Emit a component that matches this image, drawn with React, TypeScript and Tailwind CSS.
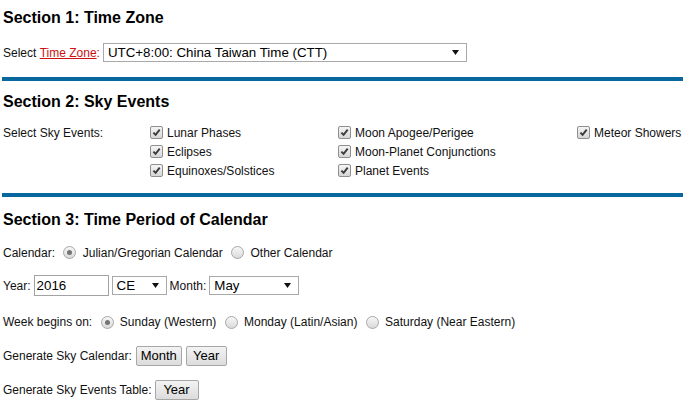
import React from 'react';

const Arrow = () => (
  <svg width="7" height="5" viewBox="0 0 7 5" className="shrink-0">
    <path d="M0 0 H7 L3.5 5 Z" fill="#111" />
  </svg>
);

const Check = () => (
  <span className="inline-flex h-[13px] w-[13px] shrink-0 items-center justify-center rounded-[2px] border border-[#8f8f8f] bg-linear-to-b from-[#f5f5f5] to-[#d6d6d6]">
    <svg width="9" height="9" viewBox="0 0 9 9">
      <path d="M1.4 4.6 L3.6 6.9 L7.7 1.6" fill="none" stroke="#3b3b3b" strokeWidth="1.9" />
    </svg>
  </span>
);

const Radio = ({ on }: { on?: boolean }) => (
  <span className="ml-[5px] mr-[3px] inline-flex h-[13px] w-[13px] shrink-0 items-center justify-center rounded-full border border-[#a8a8a8] bg-linear-to-b from-[#f7f7f7] to-[#dadada]">
    {on && <span className="h-[5px] w-[5px] rounded-full bg-[#747474]" />}
  </span>
);

interface SelectProps {
  value: string;
  className: string;
}

const Select: React.FC<SelectProps> = ({ value, className }) => (
  <span className={`flex items-center justify-between border border-[#a9a9a9] bg-white pl-[4px] pr-[7px] text-[13.33px] text-black ${className}`}>
    <span>{value}</span>
    <Arrow />
  </span>
);

const Button = ({ label, className }: { label: string; className: string }) => (
  <span className={`flex h-[20px] items-center justify-center rounded-[2px] border border-[#a7a7a7] bg-linear-to-b from-[#f3f3f3] to-[#dcdcdc] text-[13px] text-black ${className}`}>
    {label}
  </span>
);

const Heading = ({ text, className }: { text: string; className: string }) => (
  <h2 className={`flex items-center text-[16px] font-bold leading-[18px] text-black ${className}`}>{text}</h2>
);

const Divider = () => <div className="ml-[2px] h-[4px] bg-[#06689e]" />;

const CheckItem = ({ label }: { label: string }) => (
  <div className="flex h-[19px] items-center gap-[4px]">
    <Check />
    <span>{label}</span>
  </div>
);

const App: React.FC = () => {
  return (
    <div className="h-[402px] w-[683px] overflow-hidden bg-white font-['Liberation_Sans',Arial,sans-serif] text-[12px] leading-[14px] text-[#111]">
      <div className="pl-[3px]">
        <Heading text="Section 1: Time Zone" className="h-[36px]" />
        <div className="flex h-[33px] items-center">
          <span>Select&nbsp;</span>
          <span className="text-[#cc1111] underline">Time Zone</span>
          <span className="text-[#cc1111]">:</span>
          <Select value="UTC+8:00: China Taiwan Time (CTT)" className="ml-[3px] h-[19px] w-[364px]" />
        </div>
      </div>

      <div className="mt-[8px]">
        <Divider />
      </div>

      <div className="pl-[3px]">
        <Heading text="Section 2: Sky Events" className="h-[42px]" />
        <div className="flex">
          <div className="flex h-[19px] w-[147px] items-center">Select Sky Events:</div>
          <div className="w-[188px]">
            <CheckItem label="Lunar Phases" />
            <CheckItem label="Eclipses" />
            <CheckItem label="Equinoxes/Solstices" />
          </div>
          <div className="w-[239px]">
            <CheckItem label="Moon Apogee/Perigee" />
            <CheckItem label="Moon-Planet Conjunctions" />
            <CheckItem label="Planet Events" />
          </div>
          <div>
            <CheckItem label="Meteor Showers" />
          </div>
        </div>
      </div>

      <div className="mt-[13px]">
        <Divider />
      </div>

      <div className="pl-[3px]">
        <Heading text="Section 3: Time Period of Calendar" className="h-[45px]" />

        <div className="flex h-[21px] items-center">
          <span>Calendar:&nbsp;</span>
          <Radio on />
          <span>&nbsp;Julian/Gregorian Calendar&nbsp;</span>
          <Radio />
          <span>&nbsp;Other Calendar</span>
        </div>

        <div className="flex h-[45px] items-center">
          <span>Year:</span>
          <span className="ml-[3px] flex h-[21px] w-[75px] items-center border border-[#a3a3a3] bg-white pl-[2px] text-[13.33px] text-black">
            2016
          </span>
          <Select value="CE" className="ml-[3px] h-[19px] w-[55px]" />
          <span className="ml-[3px]">Month:</span>
          <Select value="May" className="ml-[3px] h-[19px] w-[90px]" />
        </div>

        <div className="flex h-[28px] items-center">
          <span>Week begins on:&nbsp;</span>
          <Radio on />
          <span>&nbsp;Sunday (Western)&nbsp;</span>
          <Radio />
          <span>&nbsp;Monday (Latin/Asian)&nbsp;</span>
          <Radio />
          <span>&nbsp;Saturday (Near Eastern)</span>
        </div>

        <div className="flex h-[39px] items-center">
          <span>Generate Sky Calendar:</span>
          <Button label="Month" className="ml-[4px] w-[46px]" />
          <Button label="Year" className="ml-[4px] w-[41px]" />
        </div>

        <div className="flex h-[30px] items-center">
          <span>Generate Sky Events Table:</span>
          <Button label="Year" className="ml-[3px] w-[44px]" />
        </div>
      </div>
    </div>
  );
};

export default App;
